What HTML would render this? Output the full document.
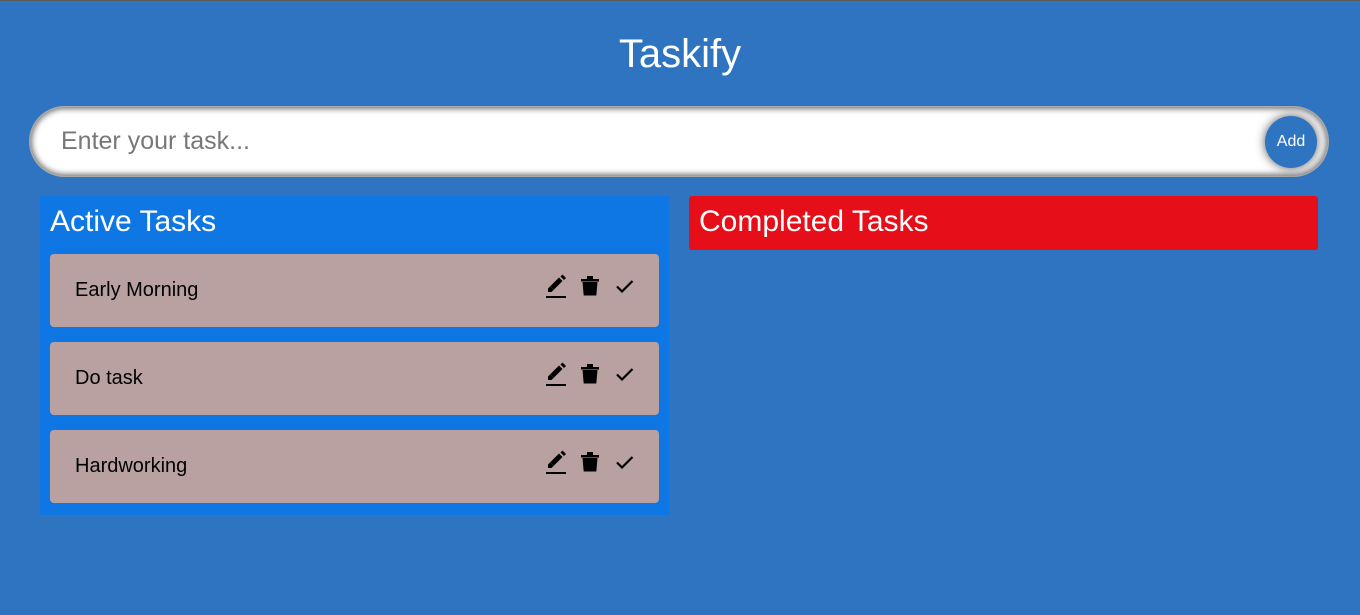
<!DOCTYPE html>
<html><head><meta charset="utf-8"><style>
*{box-sizing:border-box;margin:0;padding:0}
body{width:1360px;height:615px;background:#2f74c0;font-family:"Liberation Sans",sans-serif;border-top:1px solid #5a5a5a;position:relative;overflow:hidden}
h1{position:absolute;top:30px;left:0;width:1360px;text-align:center;color:#fff;font-weight:400;font-size:40px;line-height:46px}
.inp{position:absolute;left:30px;top:106px;width:1298px;height:69px;background:#fff;border-radius:40px;box-shadow:inset 0 0 6px 2px #777, 0 0 0 1px #aaa}
.inp span{position:absolute;left:31px;top:20px;font-size:25px;color:#777}
.btn{position:absolute;left:1265px;top:115px;width:52px;height:52px;border-radius:50%;background:#2f74c0;color:#fff;font-size:16px;text-align:center;line-height:52px;box-shadow:0 0 10px #000a}
.active{position:absolute;left:40px;top:195px;width:629px;height:319px;background:#0f77e3}
.comp{position:absolute;left:689px;top:195px;width:629px;height:54px;background:#e60e19;border-radius:3px}
.active h2,.comp h2{position:absolute;left:10px;top:10px;font-weight:400;font-size:30px;color:#fff;line-height:32px}
.card{position:absolute;left:10px;width:609px;height:73px;background:#b9a1a1;border-radius:4px}
.card span{position:absolute;left:25px;top:25px;font-size:20px;color:#000}
.ic{position:absolute;left:494px;top:18px}
</style></head><body>
<h1>Taskify</h1>
<div class="inp"><span>Enter your task...</span></div>
<div class="btn">Add</div>
<div class="active"><h2>Active Tasks</h2>
<div class="card" style="top:58px"><span>Early Morning</span><svg class="ic" width="100" height="28" viewBox="0 0 100 28"><path d="M2 24h20v2H2z M4 20v-3.5L15 5.5l3.5 3.5L7.5 20z M16.5 4.5l2-2 3.5 3.5-2 2z" fill="#000"/><path d="M37 7h18v2.5H37z M43 4h6v3h-6z M38.5 10h15l-1.2 13.5h-12.6z" fill="#000"/><path d="M73 14.5l5 5 10.5-10.5" stroke="#000" stroke-width="2.2" fill="none"/></svg></div>
<div class="card" style="top:146px"><span>Do task</span><svg class="ic" width="100" height="28" viewBox="0 0 100 28"><path d="M2 24h20v2H2z M4 20v-3.5L15 5.5l3.5 3.5L7.5 20z M16.5 4.5l2-2 3.5 3.5-2 2z" fill="#000"/><path d="M37 7h18v2.5H37z M43 4h6v3h-6z M38.5 10h15l-1.2 13.5h-12.6z" fill="#000"/><path d="M73 14.5l5 5 10.5-10.5" stroke="#000" stroke-width="2.2" fill="none"/></svg></div>
<div class="card" style="top:234px"><span>Hardworking</span><svg class="ic" width="100" height="28" viewBox="0 0 100 28"><path d="M2 24h20v2H2z M4 20v-3.5L15 5.5l3.5 3.5L7.5 20z M16.5 4.5l2-2 3.5 3.5-2 2z" fill="#000"/><path d="M37 7h18v2.5H37z M43 4h6v3h-6z M38.5 10h15l-1.2 13.5h-12.6z" fill="#000"/><path d="M73 14.5l5 5 10.5-10.5" stroke="#000" stroke-width="2.2" fill="none"/></svg></div>
</div>
<div class="comp"><h2>Completed Tasks</h2></div>
</body></html>
